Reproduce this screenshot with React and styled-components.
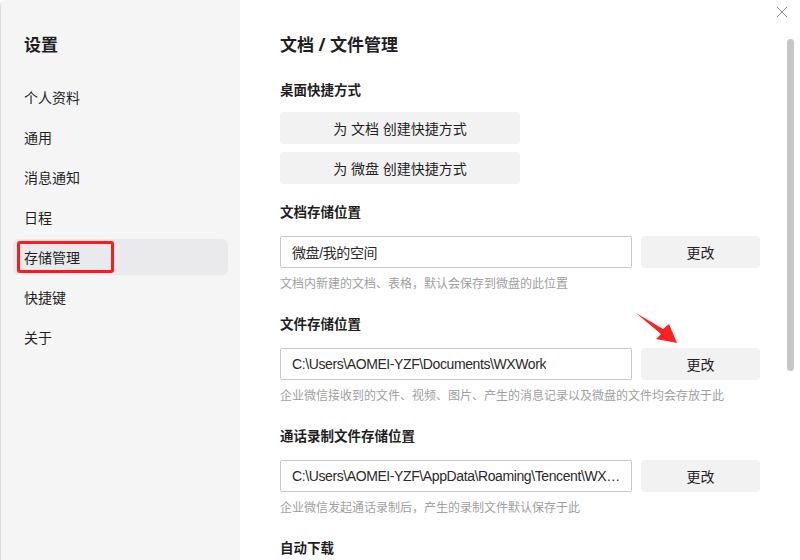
import React from "react";
import styled, { createGlobalStyle } from "styled-components";

const GlobalStyle = createGlobalStyle`
  html, body {
    margin: 0;
    padding: 0;
    width: 800px;
    height: 560px;
    overflow: hidden;
    background: #ffffff;
  }

  * {
    box-sizing: border-box;
  }
`;

const Window = styled.div`
  width: 800px;
  height: 560px;

  display: flex;

  position: relative;
  overflow: hidden;

  font-family: "Noto Sans", "Noto Sans CJK SC", sans-serif;
  color: #1f1f1f;

  border-left: 1px solid #dedede;
  border-top-left-radius: 6px;
`;

const Sidebar = styled.div`
  width: 239px;
  height: 100%;

  flex-shrink: 0;

  padding: 32px 12px 0px 12px;

  background-color: #f5f5f5;
`;

const SidebarTitle = styled.h1`
  margin: 0px 0px 21px 11px;

  font-size: 17px;
  line-height: 26px;
  font-weight: 700;
`;

const MenuList = styled.div`
  display: flex;
  flex-direction: column;
  gap: 4px;
`;

const MenuItem = styled.div`
  height: 36px;

  display: flex;
  align-items: center;

  position: relative;

  padding-left: 11px;

  font-size: 14px;

  border-radius: 6px;

  background-color: ${(props) => (props.$active ? "#eaeaec" : "transparent")};
`;

const MarkBox = styled.div`
  position: absolute;
  left: 4px;
  top: 2px;

  width: 97px;
  height: 32px;

  border: 3px solid #ff1a1a;
  border-radius: 3px;
`;

const Main = styled.div`
  flex: 1;
  height: 100%;

  padding: 32px 40px 0px 40px;

  background-color: #ffffff;
`;

const PageTitle = styled.h2`
  margin: 0px 0px 22px 0px;

  font-size: 17px;
  line-height: 26px;
  font-weight: 700;
`;

const Section = styled.div`
  margin-top: ${(props) => props.$top || 0}px;
`;

const SectionTitle = styled.h3`
  margin: 0px;

  font-size: 13.5px;
  line-height: 20px;
  font-weight: 700;
`;

const ShortcutList = styled.div`
  display: flex;
  flex-direction: column;
  gap: 8px;

  margin-top: 12px;
`;

const GrayButton = styled.button`
  width: ${(props) => props.$width || 240}px;
  height: 32px;

  flex-shrink: 0;

  border: none;
  border-radius: 4px;

  font-family: "Noto Sans", "Noto Sans CJK SC", sans-serif;
  font-size: 14px;
  color: #1f1f1f;

  background-color: #f2f2f2;
`;

const PathRow = styled.div`
  display: flex;
  gap: 9px;

  margin-top: 14px;
`;

const PathField = styled.div`
  width: 352px;
  height: 32px;

  display: flex;
  align-items: center;

  padding: 0px 10px 0px 11px;

  border: 1px solid #c9c9c9;
  border-radius: 2px;

  font-family: "Liberation Sans", "Noto Sans CJK SC", sans-serif;
  font-size: 14px;
  letter-spacing: -0.4px;
  color: #2a2a2a;
`;

const PathText = styled.span`
  min-width: 0;

  overflow: hidden;
  white-space: nowrap;
  text-overflow: ellipsis;
`;

const Hint = styled.p`
  margin: 7px 0px 0px 0px;

  font-size: 12px;
  line-height: 18px;
  color: #a0a0a0;
`;

const Scrollbar = styled.div`
  position: absolute;
  right: 6px;
  top: 39px;

  width: 7px;
  height: 332px;

  border-radius: 4px;

  background-color: #c6c6c6;
`;

const CloseButton = styled.div`
  position: absolute;
  right: 12px;
  top: 6px;

  width: 12px;
  height: 12px;

  display: flex;
`;

const Arrow = styled.svg`
  position: absolute;
  left: 630px;
  top: 308px;
`;

const menus = ["个人资料", "通用", "消息通知", "日程", "存储管理", "快捷键", "关于"];

const storages = [
  {
    title: "文档存储位置",
    path: "微盘/我的空间",
    hint: "文档内新建的文档、表格，默认会保存到微盘的此位置",
  },
  {
    title: "文件存储位置",
    path: "C:\\Users\\AOMEI-YZF\\Documents\\WXWork",
    hint: "企业微信接收到的文件、视频、图片、产生的消息记录以及微盘的文件均会存放于此",
  },
  {
    title: "通话录制文件存储位置",
    path: "C:\\Users\\AOMEI-YZF\\AppData\\Roaming\\Tencent\\WXWork\\VoipRecord",
    hint: "企业微信发起通话录制后，产生的录制文件默认保存于此",
  },
];

const App = () => {
  return (
    <>
      <GlobalStyle />
      <Window>
        <Sidebar>
          <SidebarTitle>设置</SidebarTitle>
          <MenuList>
            {menus.map((menu) => (
              <MenuItem key={menu} $active={menu === "存储管理"}>
                {menu}
                {menu === "存储管理" && <MarkBox />}
              </MenuItem>
            ))}
          </MenuList>
        </Sidebar>

        <Main>
          <PageTitle>文档 / 文件管理</PageTitle>

          <Section>
            <SectionTitle>桌面快捷方式</SectionTitle>
            <ShortcutList>
              <GrayButton>为 文档 创建快捷方式</GrayButton>
              <GrayButton>为 微盘 创建快捷方式</GrayButton>
            </ShortcutList>
          </Section>

          {storages.map((item, index) => (
            <Section key={item.title} $top={index === 0 ? 18 : 21}>
              <SectionTitle>{item.title}</SectionTitle>
              <PathRow>
                <PathField>
                  <PathText>{item.path}</PathText>
                </PathField>
                <GrayButton $width={119}>更改</GrayButton>
              </PathRow>
              <Hint>{item.hint}</Hint>
            </Section>
          ))}

          <Section $top={21}>
            <SectionTitle>自动下载</SectionTitle>
          </Section>
        </Main>

        <Scrollbar />

        <CloseButton>
          <svg width="12" height="12" viewBox="0 0 12 12">
            <path d="M1 1 L11 11 M11 1 L1 11" stroke="#8a8a8a" strokeWidth="1" fill="none" />
          </svg>
        </CloseButton>

        <Arrow width="52" height="40" viewBox="0 0 52 40">
          <polygon points="5,5 32,21 38,16 46,35 25,31 30,26" fill="#ff2020" />
        </Arrow>
      </Window>
    </>
  );
};

export default App;
